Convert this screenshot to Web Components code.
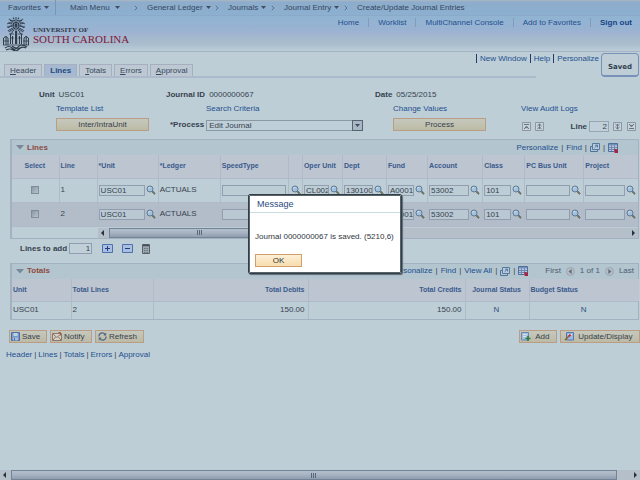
<!DOCTYPE html>
<html lang="en">
<head>
<meta charset="utf-8">
<title>Create/Update Journal Entries</title>
<style>
html,body{margin:0;min-height:100%}
body{background:#bdced7;color:#37424e;font:8px/10px "Liberation Sans",Arial,sans-serif;
--link:#24508e;--line:#a5b0c1;--head:#bcc5d0;--bar:#b3c5cf}
</style>
</head>
<body>
<journal-app></journal-app>
<script>
const base=`*{box-sizing:border-box}a{color:var(--link);text-decoration:none;white-space:nowrap}button,input,select{font:inherit;color:inherit;margin:0;padding:0;border-radius:0;outline:0}svg{display:block}`;
function define(name,html,init){
  const t=document.createElement('template');
  t.innerHTML=html.replace('<style>','<style>'+base);
  customElements.define(name,class extends HTMLElement{
    connectedCallback(){
      if(this.shadowRoot)return;
      const r=this.attachShadow({mode:'open'});
      r.append(t.content.cloneNode(true));
      if(init)init(r,this);
    }
  });
}

const glyphs={
  lens:[10,10,'<path d="M6.4 6.4 9 9.2" stroke="#51595a" stroke-width="1.7"/><path d="m6.8 7 2 2" stroke="#a48e52" stroke-width=".7"/><circle cx="4" cy="4" r="3" fill="#9fc3e4" stroke="#65788c"/><path d="M2.4 3.5q.5-1.2 1.8-1.2" stroke="#dceaf2" fill="none"/>'],
  top:[9,9,'<path d="M.5.5h8v8h-8z" fill="#c8d3d9" stroke="#8b97a5"/><path d="M2 2.5h5M2.2 7 4.5 4 6.8 7M3 5.6h3" fill="none" stroke="#667484"/>'],
  up:[9,9,'<path d="M.5.5h8v8h-8z" fill="#c8d3d9" stroke="#8b97a5"/><path d="M2.4 4 4.5 2 6.6 4M2.4 7 4.5 5 6.6 7M4.5 2v5" fill="none" stroke="#667484"/>'],
  down:[9,9,'<path d="M.5.5h8v8h-8z" fill="#c8d3d9" stroke="#8b97a5"/><path d="M2.4 2 4.5 4 6.6 2M2.4 5 4.5 7 6.6 5M4.5 2v5" fill="none" stroke="#667484"/>'],
  bottom:[9,9,'<path d="M.5.5h8v8h-8z" fill="#c8d3d9" stroke="#8b97a5"/><path d="M2 6.5h5M2.2 2 4.5 5 6.8 2M3 3.4h3" fill="none" stroke="#667484"/>'],
  popout:[10,9,'<path d="M2.5.5h7v6h-7z" fill="#b9cbdb" stroke="#597a9f"/><path d="M2.5 3.5h-2v5h7v-2M4.6 4.8 7.3 2.2M5.2 2.2h2.3v2.2" fill="none" stroke="#51739b"/>'],
  sheet:[11,10,'<path d="M.5.5h9v8h-9z" fill="#b7c9dc" stroke="#506f9d"/><path d="M1 1h8v1.4H1z" fill="#7490b8"/><path d="M1 4.5h8M1 6.5h8M3.5 2v6M6.5 2v6" stroke="#7189af"/><path d="M6 6h2l1 1 1-1v4H6l1.2-1z" fill="#a92342"/>'],
  plus:[11,9,'<path d="M.5.5h10v8H.5z" fill="#a9bfe2" stroke="#4e71ae"/><path d="M3 4.5h5M5.5 2v5" stroke="#1f3c82"/>'],
  minus:[11,9,'<path d="M.5.5h10v8H.5z" fill="#a9bfe2" stroke="#4e71ae"/><path d="M3 4.5h5" stroke="#1f3c82"/>'],
  calc:[8,10,'<path d="M.5.5h7v9h-7z" fill="#9ca8ad" stroke="#56636c"/><path d="M1 1.5h6" stroke="#454f57" stroke-width="1.5"/><path d="M2 4.5h4M2 6.5h4M2 8.5h4" stroke="#66727a" stroke-dasharray="1 .6"/>'],
  save:[9,9,'<path d="M.5.5h8v8h-8z" fill="#7899c8" stroke="#476eab"/><path d="M2.5 1h4v3h-4z" fill="#c3d2e0"/><path d="M2 5.5h5v3H2z" fill="#a8bdd6"/><path d="M3.5 6v2.5" stroke="#476eab"/>'],
  notify:[10,9,'<path d="M.5 1.5h9v7h-9z" fill="#d5d2c5" stroke="#8b776b"/><path d="m1 2 3.7 3.4L9 2M1 8l2.5-3M9 8 6.4 5" stroke="#8b776b" fill="none"/><path d="M6.5.5h2v3" stroke="#a65747" fill="none"/>'],
  refresh:[9,9,'<path d="M1 4.5A3.3 3.3 0 0 1 7 2.3M8 4.5A3.3 3.3 0 0 1 2 6.7" fill="none" stroke="#4d6686" stroke-width="1.3"/><path d="M8.2.6v3H5.3zM.8 8.4v-3h2.9z" fill="#4d6686"/>'],
  add:[10,9,'<path d="M.5.5h7v7.5h-7z" fill="#a6bfdf" stroke="#6687b5"/><path d="M2 2.5h4M2 4.5h3" stroke="#d6e1ea"/><path d="M7 4v5M4.5 6.5h5" stroke="#2b7d43" stroke-width="1.6"/>'],
  update:[10,9,'<path d="M2.5.5h7v7.5h-7z" fill="#9fb8df" stroke="#5578b0"/><path d="M4 2.5h4" stroke="#dbe4ef"/><path d="m1 8 5-5" stroke="#8a642d" stroke-width="1.6"/><path d="m5 4 1.5-1.5" stroke="#c62734" stroke-width="1.8"/>'],
  prev:[9,9,'<circle cx="4.5" cy="4.5" r="4" fill="#b3bdc8" stroke="#9ba7b3"/><path d="M5.7 2v5L2.5 4.5z" fill="#5f6d7c"/>'],
  next:[9,9,'<circle cx="4.5" cy="4.5" r="4" fill="#b3bdc8" stroke="#9ba7b3"/><path d="M3.3 2v5l3.2-2.5z" fill="#5f6d7c"/>'],
  caret:[5,3,'<path d="M0 0h5L2.5 3z" fill="#414e61"/>'],
  chevron:[4,6,'<path d="m.8.8 2.2 2.2L.8 5.2" fill="none" stroke="#5a7090"/>'],
  fold:[8,5,'<path d="M0 0h8L4 4.5z" fill="#7a8799"/>'],
  left:[4,6,'<path d="M3 0v6L0 3z" fill="#27313c"/>'],
  right:[4,6,'<path d="M1 0v6l3-3z" fill="#27313c"/>'],
  grip:[6,5,'<path d="M.5 0v5M2.5 0v5M4.5 0v5" stroke="#596879"/>']
};
define('ui-icon','<style>:host{display:block;flex:none}</style>',(r,h)=>{
  const [w,t,p]=glyphs[h.getAttribute('name')];
  r.innerHTML+=`<svg width="${w}" height="${t}" viewBox="0 0 ${w} ${t}" aria-hidden="true">${p}</svg>`;
});

define('ui-button',`<style>
:host{display:block}
button{display:flex;align-items:center;justify-content:center;gap:2px;width:100%;height:13px;line-height:11px;border:1px solid #b99d84;background:linear-gradient(#c5c8bd,#bdbba6);white-space:nowrap;padding:0 var(--pad,1px)}
:host([bright]) button{background:linear-gradient(#fdf0d6,#f7dcae);border-color:#cfa06c;color:#2d3238}
:host([start]) button{justify-content:flex-start}
</style><button type="button"><slot></slot></button>`);

define('ui-scroll',`<style>
:host{display:flex;align-items:center;gap:4px;height:10px;padding:0 3px;background:#b4bfca}
.track{flex:1;display:flex;height:100%}
.thumb{display:flex;align-items:center;justify-content:center;width:var(--thumb,100%);border:1px solid #748497;background:linear-gradient(#b3bfcb,#a8b4c2 45%,#8f9db0)}
</style><ui-icon name="left"></ui-icon><div class="track"><div class="thumb"><ui-icon name="grip"></ui-icon></div></div><ui-icon name="right"></ui-icon>`);

define('crumb-bar',`<style>
:host{display:block;background:linear-gradient(#a8b9c5 0,#8eaccb 2px,#8cb0d0);border-bottom:1px solid #8ba9c9}
nav{display:flex;align-items:center;height:15px}
a{color:#33475f}
.m{display:flex;align-items:center;gap:3px}
.f{padding:0 8px;width:56px;height:15px;border-right:1px solid #7795b6}
.n{padding-left:14px;width:78px;gap:5px}
ui-icon[name=chevron]{margin-right:9px}
.g{width:68px}.j{width:43px}.e{width:60px}
</style><nav aria-label="Breadcrumb">
<div class="m f"><a href="#">Favorites</a><ui-icon name="caret"></ui-icon></div>
<div class="m n"><a href="#">Main Menu</a><ui-icon name="caret"></ui-icon></div>
<ui-icon name="chevron"></ui-icon><div class="m g"><a href="#">General Ledger</a><ui-icon name="caret"></ui-icon></div>
<ui-icon name="chevron"></ui-icon><div class="m j"><a href="#">Journals</a><ui-icon name="caret"></ui-icon></div>
<ui-icon name="chevron"></ui-icon><div class="m e"><a href="#">Journal Entry</a><ui-icon name="caret"></ui-icon></div>
<ui-icon name="chevron"></ui-icon><a href="#">Create/Update Journal Entries</a></nav>`);

define('brand-header',`<style>
:host{display:flex;justify-content:space-between;align-items:flex-start;height:36px;background:linear-gradient(#90b4d2,#98b2d2 12px,#a2b4d3 19px,#a4b8cc 20px,#a9bdce 28px,#b9cbd6 34px);border-bottom:1px solid #a5b3c5}
.logo{display:flex;gap:3px;padding-left:2px}
.name{font-family:"Liberation Serif",serif;white-space:nowrap;padding-top:10px}
.a{font-size:7px;line-height:8px;font-weight:bold;color:#303b49}
.b{font-size:11px;line-height:11px;color:#7d1740}
nav{display:flex;align-items:center;padding:2px 8px 0 0}
nav a{padding:0 9px;border-left:1px solid #8499bb;line-height:9px}
nav a:first-child{border:0}
nav a:last-child{font-weight:bold;color:#164586;padding-right:0}
</style>
<div class="logo"><svg width="28" height="35" viewBox="0 0 28 35" fill="none" stroke="#303d4a" aria-hidden="true">
<path d="M14 16V9M14 9 6 7M14 9l8-2M14 9 7 3M14 9l7-6M14 9l-3-8M14 9l3-8M14 9V1M14 9l-9 2M14 9l9 2M14 10l-8 5M14 10l8 5M14 10l-5 8M14 10l5 8" stroke-width="1.3" stroke-dasharray="1.5 .6"/>
<path d="M5 8q2-2 5-1M23 8q-2-2-5-1M6 12q3-3 6-2M22 12q-3-3-6-2M8 4l4 1M20 4l-4 1M7 16l4-3M21 16l-4-3" stroke-width=".9"/>
<path d="M13 15h2.2v13H13z" fill="#303d4a" stroke="none"/>
<path d="M1.5 29v-7q2-3 4.5 0v7M22 29v-7q2-3 4.5 0v7M4 20v9M24.2 20v9M8.5 28V18M19.5 28V18M10.5 28v-8M17.5 28v-8" stroke-width="1"/>
<path d="M7 18h5M16 18h5M1 25h6M21 25h6M1 29h26M8 22h4M16 22h4" stroke-width=".8"/>
<path d="M3 32q4-3 7 0t6-1 9 0M4 34q4-2 7 0t6-1 7-1M10 30q3 3 8 2" stroke-width="1.2"/>
</svg><div class="name"><div class="a">UNIVERSITY OF</div><div class="b">SOUTH CAROLINA</div></div></div>
<nav aria-label="Portal"><a href="#">Home</a><a href="#">Worklist</a><a href="#">MultiChannel Console</a><a href="#">Add to Favorites</a><a href="#">Sign out</a></nav>`);

define('page-tabs',`<style>
:host{display:flex;justify-content:space-between;height:25px}
.tabs{flex:1;display:flex;align-items:flex-end;gap:2px;padding-left:4px;border-bottom:2px solid #acbacb;margin-bottom:-1px}
.tabs a{height:12px;line-height:12px;border:1px solid #a5afc0;border-bottom:0;background:#bdc8d2;padding:0 5px;color:#36485f;text-align:center}
.tabs a[aria-current]{background:#a6b9d0;font-weight:bold;color:#214a80}
.right{display:flex;align-items:flex-start;gap:2px;width:164px;margin-left:-60px;z-index:1}
.links{display:flex;padding-top:2px}
.links a{padding:0 3px;border-left:1px solid #1e3c70;line-height:9px}
.links a:last-child{padding-right:0}
.saved{flex:none;margin:1px 2px 0 auto;width:38px;height:24px;border:1px solid #7891b8;border-bottom-width:2px;border-radius:4px;font:bold 7px/26px "DejaVu Sans",sans-serif;text-align:center;color:#32404f;background:#bfcdd7}
</style><nav class="tabs" aria-label="Journal pages"><a href="#"><u>H</u>eader</a><a href="#" aria-current="page">Lines</a><a href="#"><u>T</u>otals</a><a href="#"><u>E</u>rrors</a><a href="#"><u>A</u>pproval</a></nav>
<div class="right"><div class="links"><a href="#">New Window</a><a href="#">Help</a><a href="#">Personalize</a></div><div class="saved" role="status">Saved</div></div>`);

define('journal-form',`<style>
:host{display:block;padding-top:13px}
.r{display:grid;grid-template-columns:56fr 150fr 187fr 128fr 119fr;align-items:center}
.r>*{min-width:0}
.ids{display:grid;grid-template-columns:54fr 113fr 42fr 166fr 265fr;margin:0}
.ids div{display:flex;gap:4px;white-space:nowrap}
.ids{grid-template-columns:39fr 127fr 209fr 265fr}
dt{font-weight:bold}
dd{margin:0}
.links,.acts{margin-top:4px}
.acts{height:14px}
.acts ui-button{width:93px;align-self:start}
.proc{display:flex;align-items:center;gap:2px;margin-left:-36px;padding-right:30px}
label{font-weight:bold;white-space:nowrap}
.sel{position:relative;flex:1;height:11px}
select{appearance:none;width:100%;height:11px;line-height:9px;border:1px solid #8b98a6;background:#bfcfd7;padding-left:2px;display:block}
.dd{position:absolute;right:0;top:0;width:11px;height:11px;border:1px solid #566472;background:#a9b6c3;display:grid;place-items:center;pointer-events:none}
.pos{display:flex;align-items:center;gap:4px;padding-left:1px;margin-top:3px}
.pos label{margin-left:auto;margin-right:-2px}
.pos div{display:flex;gap:5px;margin-right:4px}
.pos input{width:20px;height:11px;border:1px solid #98a5b2;background:#c1d0d8;text-align:right;padding-right:1px}
</style>
<dl class="ids"><span></span><div><dt>Unit</dt><dd>USC01</dd></div><div><dt>Journal ID</dt><dd>0000000067</dd></div><div><dt>Date</dt><dd>05/25/2015</dd></div></dl>
<div class="r links"><span></span><a href="#">Template List</a><a href="#">Search Criteria</a><a href="#">Change Values</a><a href="#">View Audit Logs</a></div>
<div class="r acts"><span></span><ui-button>Inter/IntraUnit</ui-button><div class="proc"><label for="p">*Process</label><div class="sel"><select id="p"><option>Edit Journal</option></select><span class="dd"><ui-icon name="caret"></ui-icon></span></div></div><ui-button>Process</ui-button>
<div class="pos"><ui-icon name="top"></ui-icon><ui-icon name="up"></ui-icon><label for="n">Line</label><input id="n" value="2"><div><ui-icon name="down"></ui-icon><ui-icon name="bottom"></ui-icon></div></div></div>`);

define('grid-panel',`<style>
:host{display:block;border:1px solid var(--line);border-left-width:2px}
header{display:flex;justify-content:space-between;align-items:center;height:15px;background:var(--bar);padding:0 4px}
h2{display:flex;align-items:center;gap:3px;margin:0;font-size:8px;line-height:10px;color:#8d4c3f}
</style><header><h2><ui-icon name="fold"></ui-icon><slot name="title"></slot></h2><slot name="tools"></slot></header><slot></slot>`);

define('grid-tools',`<style>
:host{display:flex;align-items:center;gap:3px;white-space:nowrap}
.page{display:flex;align-items:center;gap:5px;margin-left:13px;color:#4b5c72}
.end{width:12px}
</style>`,(r,h)=>{
  const p=h.hasAttribute('paged');
  r.innerHTML+=`<a href="#">Personalize</a>|<a href="#">Find</a>|${p?'<a href="#">View All</a>|':''}<ui-icon name="popout"></ui-icon>|<ui-icon name="sheet"></ui-icon>`+
  (p?'<div class="page"><span>First</span><ui-icon name="prev"></ui-icon><span>1 of 1</span><ui-icon name="next"></ui-icon><span>Last</span></div>':'<span class="end"></span>');
});

const tableCss=`table{width:100%;table-layout:fixed;border-collapse:collapse}
th{background:var(--head);font-size:7px;color:#3a5a8c;text-align:left;height:23px}
th,td{border:1px solid #b0bbca;border-top:0;padding:0 2px 0 1px;white-space:nowrap}
th:first-child,td:first-child{border-left:0}th:last-child,td:last-child{border-right:0}`;

define('lines-table',`<style>${tableCss}
:host{display:block}
td{height:24px}
tbody tr:nth-child(2) td{background:#b2bdc9}
th:first-child,td:first-child{text-align:center}
.f{display:flex;align-items:center;gap:1px}
.f input{flex:1;min-width:0;width:0;height:11px;border:1px solid #929eb0;background:#bccdd6;padding:0 0 0 1px}
tr:nth-child(2) .f input{background:#b9c8d2}
.c{appearance:none;width:8px;height:8px;border:1px solid #7f8c9a;background:linear-gradient(135deg,#8a98a5,#b8c4ce);vertical-align:middle}
td:nth-child(6){padding:0 0 0 2px;border-left-color:transparent}
.s{display:grid;grid-template-columns:86fr 541fr;border-top:1px solid #bdccd5}
</style><table><colgroup></colgroup><thead><tr></tr></thead><tbody></tbody></table><div class="s"><span></span><ui-scroll style="--thumb:35%"></ui-scroll></div>`,r=>{
  const heads=['Select','Line','*Unit','*Ledger','SpeedType','','Oper Unit','Dept','Fund','Account','Class','PC Bus Unit','Project'];
  r.querySelector('colgroup').innerHTML=[47,38,61,62,68,14,40,44,41,55,42,59,54].map(w=>`<col style="width:${w}px">`).join('');
  r.querySelector('thead tr').innerHTML=heads.map(t=>t?`<th>${t}</th>`:'<th aria-label="Look up"></th>').join('');
  const lens='<ui-icon name="lens"></ui-icon>';
  const field=(n,t,v,l=lens)=>`<td><div class="f"><input aria-label="${t} line ${n}" value="${v}">${l}</div></td>`;
  r.querySelector('tbody').innerHTML=[1,2].map(n=>`<tr><td><input class="c" type="checkbox" aria-label="Select line ${n}"></td><td>${n}</td>`+field(n,'Unit','USC01')+'<td>ACTUALS</td>'+field(n,'SpeedType','','')+`<td>${lens}</td>`+field(n,'Oper Unit','CL002')+field(n,'Dept','130100')+field(n,'Fund','A0001')+field(n,'Account','53002')+field(n,'Class','101')+field(n,'PC Bus Unit','')+field(n,'Project','')+'</tr>').join('');
});

define('totals-table',`<style>${tableCss}
:host{display:block}
td{height:17px;border-bottom:0}
.n{text-align:right;padding-right:3px}.c{text-align:center}td.c{color:#2c527f}
</style><table><colgroup><col style="width:59px"><col style="width:82px"><col style="width:155px"><col style="width:157px"><col style="width:64px"><col style="width:110px"></colgroup>
<thead><tr><th>Unit</th><th>Total Lines</th><th class="n">Total Debits</th><th class="n">Total Credits</th><th class="c">Journal Status</th><th>Budget Status</th></tr></thead>
<tbody><tr><td>USC01</td><td>2</td><td class="n">150.00</td><td class="n">150.00</td><td class="c">N</td><td class="c">N</td></tr></tbody></table>`);

define('add-lines',`<style>
:host{display:flex;align-items:center;padding-left:20px;height:20px}
input{width:23px;height:11px;border:1px solid #929eb0;background:#c1d0d8;text-align:right;padding-right:1px;margin:0 10px 0 2px}
button{border:0;background:none;margin-right:9px}
label{font-weight:bold}
</style><label for="a">Lines to add</label><input id="a" value="1"><button aria-label="Add lines"><ui-icon name="plus"></ui-icon></button><button aria-label="Delete lines"><ui-icon name="minus"></ui-icon></button><button aria-label="Calculate"><ui-icon name="calc"></ui-icon></button>`);

define('page-actions',`<style>
:host{display:block}
.b{display:flex;gap:3px;padding-left:9px;height:13px}
.sp{flex:1}
nav{display:flex;gap:2px;padding:7px 0 0 6px}
</style><div class="b"><ui-button start style="width:38px">
<ui-icon name="save"></ui-icon>Save</ui-button><ui-button start style="width:42px"><ui-icon name="notify"></ui-icon>Notify</ui-button><ui-button start style="width:49px;--pad:2px"><ui-icon name="refresh"></ui-icon>Refresh</ui-button><span class="sp"></span><ui-button start style="width:38px"><ui-icon name="add"></ui-icon>&nbsp;Add</ui-button><ui-button start style="width:80px;--pad:3px"><ui-icon name="update"></ui-icon>&nbsp;Update/Display</ui-button></div>
<nav aria-label="Page links"><a href="#">Header</a>|<a href="#">Lines</a>|<a href="#">Totals</a>|<a href="#">Errors</a>|<a href="#">Approval</a></nav>`);

define('message-dialog',`<style>
:host{display:block;position:absolute;left:248px;top:194px;width:154px;background:#fff;border:1px solid #333e46;outline:1px solid #56636b;outline-offset:-2px;border-radius:2px;box-shadow:1px 1px 1px #5d6a73;color:#30353b}
h1{margin:0;padding:3px 8px 1px;font-size:9px;line-height:13px;font-weight:normal;color:#2b4a7a;border-bottom:1px solid #c9dcdf}
p{margin:0;padding:19px 6px 12px;white-space:nowrap}
ui-button{width:47px;margin:0 0 6px 6px}
</style><div role="dialog" aria-modal="true" aria-labelledby="t"><h1 id="t"><slot name="title"></slot></h1><p><slot></slot></p><ui-button bright>OK</ui-button></div>`);

define('journal-app',`<style>
:host{display:flex;flex-direction:column;min-height:100vh}
grid-panel{margin:0 1px 0 10px}
.l{margin-top:7px}
.t{margin-top:4px}
page-actions{margin-top:10px}
.foot{margin-top:auto}
</style>
<crumb-bar></crumb-bar><brand-header></brand-header><page-tabs></page-tabs>
<main><journal-form></journal-form>
<grid-panel class="l"><span slot="title">Lines</span><grid-tools slot="tools"></grid-tools><lines-table></lines-table></grid-panel>
<add-lines></add-lines>
<grid-panel class="t"><span slot="title">Totals</span><grid-tools slot="tools" paged></grid-tools><totals-table></totals-table></grid-panel>
<page-actions></page-actions></main>
<ui-scroll class="foot" style="--thumb:98%"></ui-scroll>
<message-dialog><span slot="title">Message</span>Journal 0000000067 is saved. (5210,6)</message-dialog>`);
</script>
</body>
</html>
